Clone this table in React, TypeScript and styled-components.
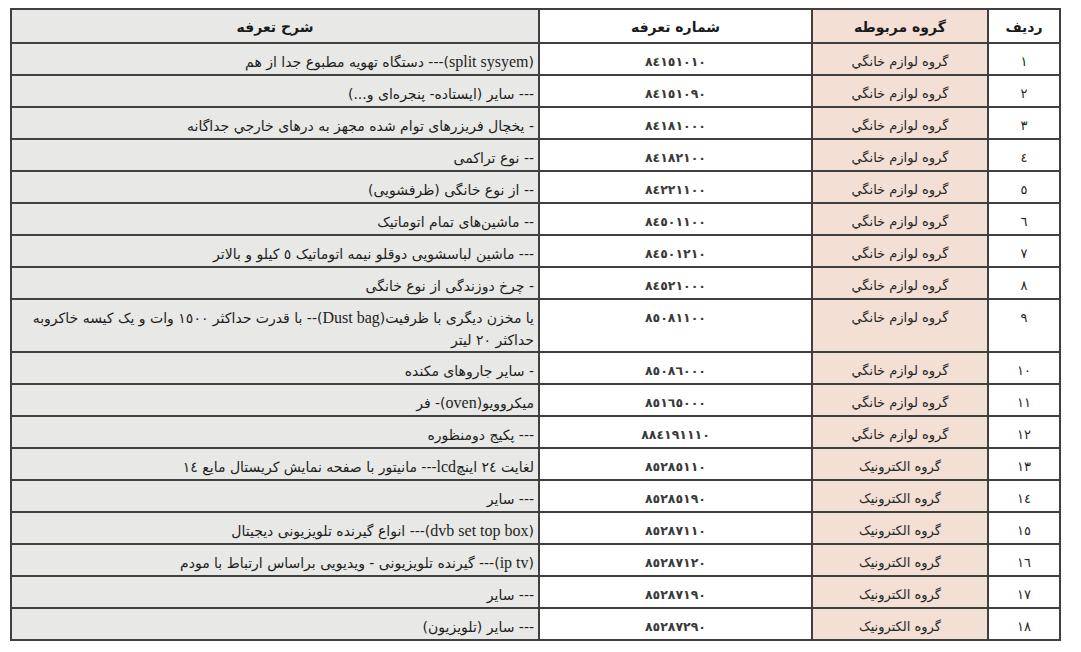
import React from 'react'
import styled, { createGlobalStyle } from 'styled-components'

type Group = 'home' | 'electronic'

interface TariffRow {
  readonly no: string
  readonly group: Group
  readonly code: string
  readonly desc: string
}

const groupLabel: Record<Group, string> = {
  home: 'گروه لوازم خانگي',
  electronic: 'گروه الکترونیک',
}

// ردیف‌های جدول تعرفه
const rows: TariffRow[] = [
  { no: '١', group: 'home', code: '٨٤١٥١٠١٠', desc: '(split sysyem)--- دستگاه تهویه مطبوع جدا  از هم' },
  { no: '٢', group: 'home', code: '٨٤١٥١٠٩٠', desc: '--- سایر (ایستاده- پنجره‌ای و...)' },
  { no: '٣', group: 'home', code: '٨٤١٨١٠٠٠', desc: '- یخچال فریزرهای توام شده مجهز به درهای خارجي جداگانه' },
  { no: '٤', group: 'home', code: '٨٤١٨٢١٠٠', desc: '-- نوع تراکمی' },
  { no: '٥', group: 'home', code: '٨٤٢٢١١٠٠', desc: '-- از نوع خانگی (ظرفشویی)' },
  { no: '٦', group: 'home', code: '٨٤٥٠١١٠٠', desc: '-- ماشین‌های تمام اتوماتیک' },
  { no: '٧', group: 'home', code: '٨٤٥٠١٢١٠', desc: '--- ماشین لباسشویی دوقلو نیمه اتوماتیک ٥ کیلو و بالاتر' },
  { no: '٨', group: 'home', code: '٨٤٥٢١٠٠٠', desc: '- چرخ دوزندگی از نوع خانگی' },
  {
    no: '٩', group: 'home', code: '٨٥٠٨١١٠٠',
    desc: 'یا مخزن دیگری با ظرفیت(Dust bag)-- با قدرت حداکثر ١٥٠٠ وات و یک کیسه خاکروبه\nحداکثر ٢٠ لیتر',
  },
  { no: '١٠', group: 'home', code: '٨٥٠٨٦٠٠٠', desc: '- سایر جاروهای مکنده' },
  { no: '١١', group: 'home', code: '٨٥١٦٥٠٠٠', desc: 'میکروویو(oven)- فر' },
  { no: '١٢', group: 'home', code: '٨٨٤١٩١١١٠', desc: '--- پکیج دومنظوره' },
  { no: '١٣', group: 'electronic', code: '٨٥٢٨٥١١٠', desc: 'لغایت ٢٤ اینچlcd--- مانیتور با صفحه نمایش کریستال مایع ١٤' },
  { no: '١٤', group: 'electronic', code: '٨٥٢٨٥١٩٠', desc: '--- سایر' },
  { no: '١٥', group: 'electronic', code: '٨٥٢٨٧١١٠', desc: '(dvb set top box)--- انواع گیرنده تلویزیونی دیجیتال' },
  { no: '١٦', group: 'electronic', code: '٨٥٢٨٧١٢٠', desc: '(ip tv)--- گیرنده تلویزیونی - ویدیویی براساس ارتباط با مودم' },
  { no: '١٧', group: 'electronic', code: '٨٥٢٨٧١٩٠', desc: '--- سایر' },
  { no: '١٨', group: 'electronic', code: '٨٥٢٨٧٢٩٠', desc: '--- سایر (تلویزیون)' },
]

// کلمات لاتین با فونت بزرگ‌تر نمایش داده می‌شوند
const renderDesc = (text: string) =>
  text.split(/([A-Za-z][A-Za-z ]*[A-Za-z])/).map((part, idx) =>
    /^[A-Za-z]/.test(part)
      ? <StyledLatin key={idx}>{part}</StyledLatin>
      : <React.Fragment key={idx}>{part}</React.Fragment>
  )

const GlobalStyle = createGlobalStyle`
  html, body {
    margin: 0;
    padding: 0;
    background: #ffffff;
  }
  body {
    font-family: "Liberation Serif", "DejaVu Sans", serif;
    color: #1e1e1e;
  }
`

const App: React.FC = () => {
  return (
    <>
      <GlobalStyle />
      <StyledPage>
        <StyledTable dir="rtl">
          <colgroup>
            <col style={{ width: 72 }} />
            <col style={{ width: 176 }} />
            <col style={{ width: 273 }} />
            <col style={{ width: 528 }} />
          </colgroup>
          <thead>
            <StyledHeadRow>
              <StyledHeadCell>ردیف</StyledHeadCell>
              <StyledHeadCell $tone="group">گروه مربوطه</StyledHeadCell>
              <StyledHeadCell>شماره تعرفه</StyledHeadCell>
              <StyledHeadCell $tone="desc">شرح تعرفه</StyledHeadCell>
            </StyledHeadRow>
          </thead>
          <tbody>
            {rows.map(row => (
              <StyledRow key={row.no}>
                <StyledCell>{row.no}</StyledCell>
                <StyledCell $tone="group">{groupLabel[row.group]}</StyledCell>
                <StyledCodeCell>{row.code}</StyledCodeCell>
                <StyledDescCell>{renderDesc(row.desc)}</StyledDescCell>
              </StyledRow>
            ))}
          </tbody>
        </StyledTable>
      </StyledPage>
    </>
  )
}

type Tone = 'plain' | 'group' | 'desc'

const toneBg = (tone?: Tone) => {
  if (tone === 'group') return '#f3dfd4'
  if (tone === 'desc') return '#e8e8e6'
  return '#ffffff'
}

const StyledPage = styled.main`
  padding: 8px 0 0 10px;
  width: 1081px;
  height: 652px;
  box-sizing: border-box;
  overflow: hidden;
`

const StyledTable = styled.table`
  width: 1050px;
  border-collapse: collapse;
  table-layout: fixed;
  border: 2px solid #404040;
`

const StyledHeadRow = styled.tr`
  height: 34px;
`

const StyledHeadCell = styled.th<{ $tone?: Tone }>`
  border: 2px solid #404040;
  background: ${props => toneBg(props.$tone)};
  font-family: "DejaVu Sans", sans-serif;
  font-weight: bold;
  font-size: 14px;
  line-height: 20px;
  text-align: center;
  padding: 2px 4px 0;
  color: #1b1b1b;
`

const StyledRow = styled.tr`
  height: 32px;
`

const StyledCell = styled.td<{ $tone?: Tone }>`
  border: 2px solid #404040;
  background: ${props => toneBg(props.$tone)};
  font-family: "DejaVu Sans", sans-serif;
  font-size: 13px;
  line-height: 22px;
  text-align: center;
  vertical-align: top;
  padding: 7px 4px 0;
  color: #262626;
`

const StyledCodeCell = styled(StyledCell)`
  font-weight: bold;
  font-size: 12.5px;
  letter-spacing: 0.6px;
  color: #3a3a3a;
`

const StyledDescCell = styled(StyledCell)`
  background: #e8e8e6;
  text-align: right;
  font-family: "DejaVu Sans", sans-serif;
  font-size: 14px;
  white-space: pre-line;
  padding: 7px 4px 0 6px;
  color: #1e1e1e;
`

const StyledLatin = styled.span`
  font-family: "Liberation Serif", serif;
  font-size: 16px;
  line-height: 14px;
`

export default App
